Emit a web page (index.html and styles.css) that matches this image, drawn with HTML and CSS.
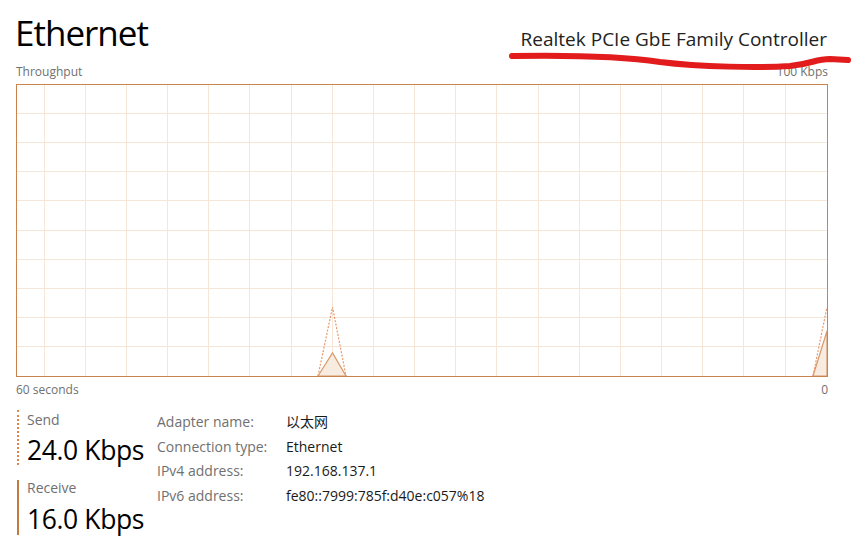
FILE: index.html
```html
<!DOCTYPE html>
<html>
<head>
<meta charset="utf-8">
<link rel="stylesheet" href="styles.css">
</head>
<body>
<div class="page">
  <header class="header">
    <h1 class="title">Ethernet</h1>
    <div class="adapter">Realtek PCIe GbE Family Controller</div>
    <svg class="scribble" width="352" height="30" viewBox="500 45 352 30">
      <path d="M512,56 C570,55 620,56 660,62 C700,67 760,68 790,66 C812,64 815,59 830,59 L848,60" fill="none" stroke="#e21c1c" stroke-width="6" stroke-linecap="round" stroke-linejoin="round"/>
    </svg>
  </header>
  <div class="axis axis-top">
    <span>Throughput</span>
    <span>100 Kbps</span>
  </div>
  <svg class="graph" width="812" height="293" viewBox="0 0 812 293">
    <g stroke="#f5e6d8" stroke-width="1">
      <line x1="28.5" y1="0" x2="28.5" y2="293"/>
      <line x1="69.5" y1="0" x2="69.5" y2="293"/>
      <line x1="110.5" y1="0" x2="110.5" y2="293"/>
      <line x1="151.5" y1="0" x2="151.5" y2="293"/>
      <line x1="192.5" y1="0" x2="192.5" y2="293"/>
      <line x1="233.5" y1="0" x2="233.5" y2="293"/>
      <line x1="275.5" y1="0" x2="275.5" y2="293"/>
      <line x1="316.5" y1="0" x2="316.5" y2="293"/>
      <line x1="357.5" y1="0" x2="357.5" y2="293"/>
      <line x1="398.5" y1="0" x2="398.5" y2="293"/>
      <line x1="439.5" y1="0" x2="439.5" y2="293"/>
      <line x1="480.5" y1="0" x2="480.5" y2="293"/>
      <line x1="522.5" y1="0" x2="522.5" y2="293"/>
      <line x1="563.5" y1="0" x2="563.5" y2="293"/>
      <line x1="604.5" y1="0" x2="604.5" y2="293"/>
      <line x1="645.5" y1="0" x2="645.5" y2="293"/>
      <line x1="686.5" y1="0" x2="686.5" y2="293"/>
      <line x1="727.5" y1="0" x2="727.5" y2="293"/>
      <line x1="769.5" y1="0" x2="769.5" y2="293"/>
      <line x1="0" y1="29.5" x2="812" y2="29.5"/>
      <line x1="0" y1="58.5" x2="812" y2="58.5"/>
      <line x1="0" y1="87.5" x2="812" y2="87.5"/>
      <line x1="0" y1="116.5" x2="812" y2="116.5"/>
      <line x1="0" y1="146.5" x2="812" y2="146.5"/>
      <line x1="0" y1="175.5" x2="812" y2="175.5"/>
      <line x1="0" y1="204.5" x2="812" y2="204.5"/>
      <line x1="0" y1="233.5" x2="812" y2="233.5"/>
      <line x1="0" y1="262.5" x2="812" y2="262.5"/>
    </g>
    <path d="M302,292 L316.5,269 L330,292 Z" fill="#f8ebdf" stroke="#d69a6c" stroke-width="1.2"/>
    <path d="M302,292 L316.5,223 L330,292" fill="none" stroke="#e9976a" stroke-width="1.2" stroke-dasharray="2 1.5"/>
    <path d="M797,292 L811,247 L811,292 Z" fill="#f8ebdf" stroke="#d69a6c" stroke-width="1.2"/>
    <path d="M797,292 L811,223" fill="none" stroke="#e9976a" stroke-width="1.2" stroke-dasharray="2 1.5"/>
    <rect x="0.5" y="0.5" width="811" height="292" fill="none" stroke="#c9834c" stroke-width="1"/>
  </svg>
  <div class="axis axis-bottom">
    <span>60 seconds</span>
    <span>0</span>
  </div>
  <section class="details">
    <div class="rates">
      <div class="rate rate-send">
        <div class="rate-label">Send</div>
        <div class="rate-value">24.0 Kbps</div>
      </div>
      <div class="rate rate-receive">
        <div class="rate-label">Receive</div>
        <div class="rate-value">16.0 Kbps</div>
      </div>
    </div>
    <dl class="props">
      <dt>Adapter name:</dt><dd>以太网</dd>
      <dt>Connection type:</dt><dd>Ethernet</dd>
      <dt>IPv4 address:</dt><dd>192.168.137.1</dd>
      <dt>IPv6 address:</dt><dd>fe80::7999:785f:d40e:c057%18</dd>
    </dl>
  </section>
</div>
</body>
</html>
```

FILE: styles.css
```css
* { box-sizing: border-box; }
html, body {
  margin: 0;
  padding: 0;
  background: #ffffff;
}
body {
  font-family: "Open Sans", "Noto Sans CJK SC", sans-serif;
  color: #1a1a1a;
  width: 852px;
  height: 541px;
  overflow: hidden;
}
.page {
  padding: 0 0 0 16px;
  width: 852px;
}
.header {
  position: relative;
  display: flex;
  justify-content: space-between;
  align-items: baseline;
  height: 64px;
  padding: 11px 25px 0 0;
}
.title {
  margin: 0 0 0 -1px;
  font-size: 35px;
  font-weight: 400;
  line-height: 44px;
  letter-spacing: -1px;
  color: #000;
}
.adapter {
  font-size: 19px;
  line-height: 24px;
  color: #222;
  letter-spacing: 0;
}
.scribble {
  position: absolute;
  left: 484px;
  top: 45px;
  z-index: 2;
}
.axis {
  display: flex;
  justify-content: space-between;
  width: 812px;
  font-size: 12px;
  color: #707070;
}
.axis-top {
  height: 20px;
  line-height: 16px;
}
.graph {
  display: block;
}
.axis-bottom {
  height: 33px;
  line-height: 25px;
}
.details {
  display: flex;
}
.rates {
  width: 141px;
  display: flex;
  flex-direction: column;
  gap: 15px;
}
.rate {
  margin-left: 1px;
  padding-left: 8px;
  height: 55px;
}
.rate-send {
  border-left: 2px dotted #e0874f;
}
.rate-receive {
  border-left: 2px solid #c27a3e;
}
.rate-label {
  font-size: 14px;
  line-height: 18px;
  color: #707070;
  margin-top: 1px;
}
.rate-value {
  font-size: 26.5px;
  line-height: 34px;
  margin-top: 4px;
  letter-spacing: -0.4px;
  color: #000;
}
.rate-receive .rate-label {
  margin-top: -1px;
}
.rate-receive .rate-value {
  margin-top: 5px;
}
.props {
  margin: 0;
  display: grid;
  grid-template-columns: 129px auto;
  grid-auto-rows: 24.5px;
  font-size: 14px;
  line-height: 24.5px;
}
.props dt {
  color: #707070;
}
.props dd {
  margin: 0;
  color: #1a1a1a;
}
```
